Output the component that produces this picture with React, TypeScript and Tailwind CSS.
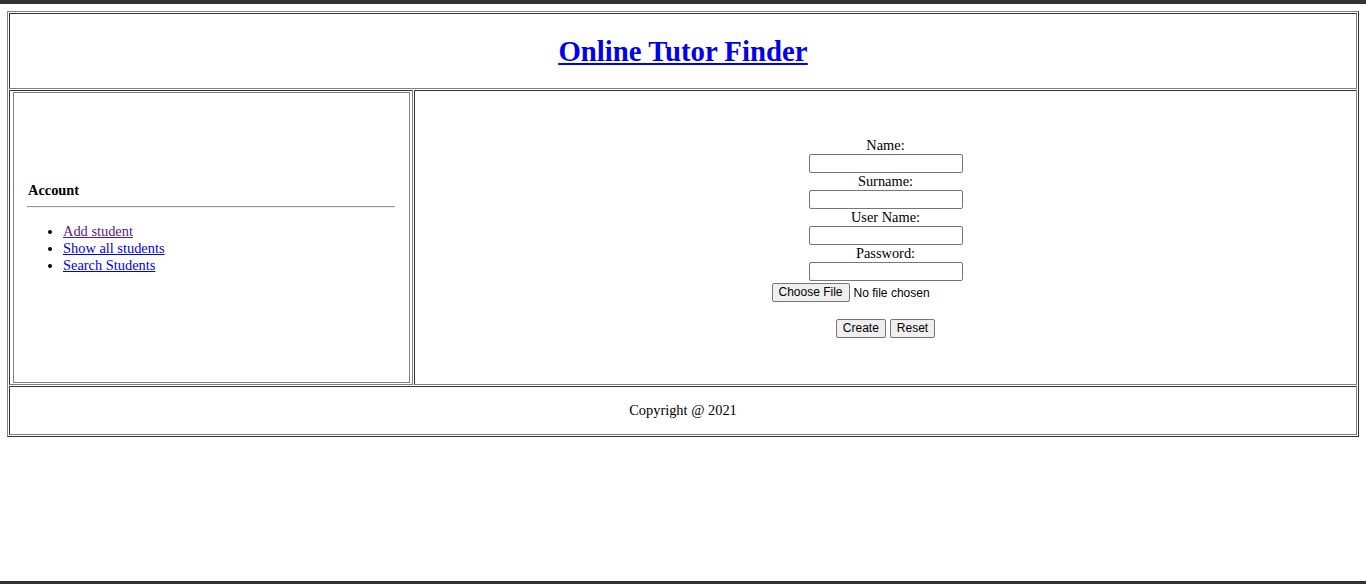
import React from "react";

const serif = "font-['Liberation_Serif','Times_New_Roman',serif]";
const sans = "font-['Liberation_Sans',Arial,sans-serif]";

function Field({ label, type = "text" }: { label: string; type?: string }) {
  return (
    <>
      <div className="h-[17px] leading-[17px]">{label}</div>
      <input
        type={type}
        className="h-[19px] w-[154px] border border-[#767676] rounded-[2px] bg-white"
      />
    </>
  );
}

function Btn({ children }: { children: React.ReactNode }) {
  return (
    <button
      className={`${sans} h-[19px] px-[6px] text-[12px] leading-[15px] text-black bg-[#efefef] border border-[#767676] rounded-[2px]`}
    >
      {children}
    </button>
  );
}

export default function App() {
  return (
    <div className={`${serif} h-[584px] flex flex-col bg-white text-[14.4px] text-black`}>
      <div className="h-[4px] bg-[#333]" />

      <div className="pl-[7px] pt-[7px]">
        {/* outer table */}
        <div className="w-[1352px] border border-t-[#808080] border-l-[#808080] border-b-[#333] border-r-[#333] p-[1px] flex flex-col gap-[1px]">
          {/* header */}
          <div className="h-[76px] flex items-center justify-center border border-t-[#333] border-l-[#333] border-b-[#808080] border-r-[#808080]">
            <h1 className="text-[28.8px] font-bold leading-[33px] text-[#0000ee] underline">
              <a href="#">Online Tutor Finder</a>
            </h1>
          </div>

          {/* main row */}
          <div className="h-[295px] flex gap-[1px]">
            <div className="w-[404px] pl-[3px] pr-[2px] py-[1px] border border-t-[#333] border-l-[#333] border-b-[#808080] border-r-[#808080]">
              <div className="h-full border border-[#808080] pl-[13px] pr-[14px] pt-[89px]">
                <h4 className="ml-[1px] font-bold h-[17px] leading-[17px]">Account</h4>
                <div className="mt-[7px] h-[2px] border-t border-t-[#9a9a9a] border-b border-b-[#eeeeee]" />
                <ul className="mt-[15px] list-disc pl-[36px] leading-[17px]">
                  <li>
                    <a href="#" className="text-[#551a8b] underline">Add student</a>
                  </li>
                  <li>
                    <a href="#" className="text-[#0000ee] underline">Show all students</a>
                  </li>
                  <li>
                    <a href="#" className="text-[#0000ee] underline">Search Students</a>
                  </li>
                </ul>
              </div>
            </div>

            <div className="flex-1 flex flex-col items-center pt-[46px] border border-t-[#333] border-l-[#333] border-b-[#808080] border-r-[#808080]">
              <form className="flex flex-col items-center">
                <Field label="Name:" />
                <Field label="Surname:" />
                <Field label="User Name:" />
                <Field label="Password:" type="password" />
                <div className={`${sans} w-[228px] h-[19px] mt-[2px] flex items-center gap-[4px] text-[12px]`}>
                  <Btn>Choose File</Btn>
                  <span>No file chosen</span>
                </div>
                <div className="h-[17px]" />
                <div className="flex gap-[4px]">
                  <Btn>Create</Btn>
                  <Btn>Reset</Btn>
                </div>
              </form>
            </div>
          </div>

          {/* footer */}
          <div className="h-[49px] flex items-center justify-center border border-t-[#333] border-l-[#333] border-b-[#808080] border-r-[#808080]">
            Copyright @ 2021
          </div>
        </div>
      </div>

      <div className="mt-auto h-[3px] bg-[#333]" />
    </div>
  );
}
